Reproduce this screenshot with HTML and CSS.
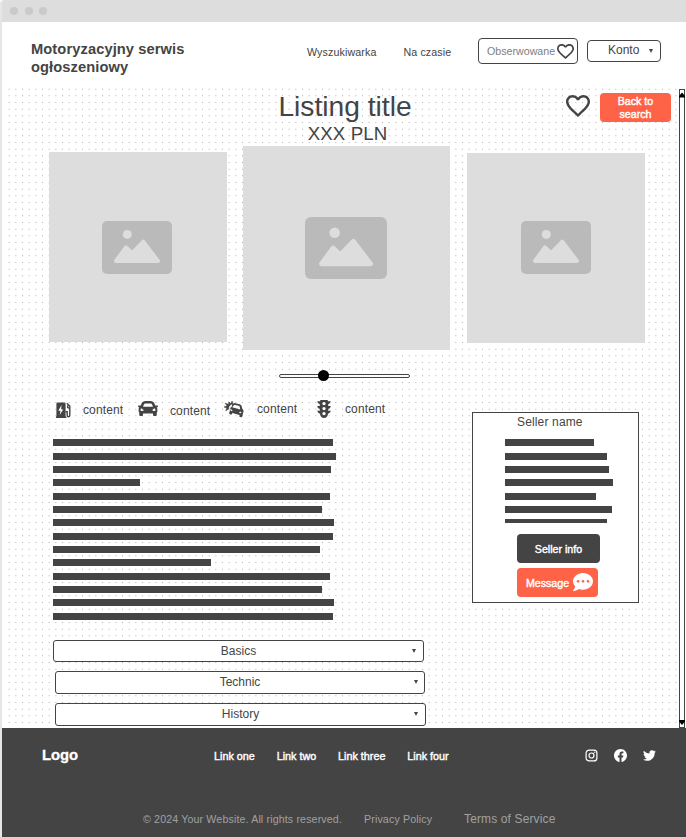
FILE: index.html
```html
<!DOCTYPE html>
<html lang="pl">
<head>
<meta charset="utf-8">
<title>Listing title</title>
<link rel="stylesheet" href="styles.css">
</head>
<body>
<svg class="defs" width="0" height="0" aria-hidden="true">
  <defs>
    <symbol id="heart" viewBox="2 3 20 18.35" preserveAspectRatio="none"><path d="M12.1,18.55L12,18.65L11.89,18.55C7.14,14.24 4,11.39 4,8.5C4,6.5 5.5,5 7.5,5C9.04,5 10.54,6 11.07,7.36H12.93C13.46,6 14.96,5 16.5,5C18.5,5 20,6.5 20,8.5C20,11.39 16.86,14.24 12.1,18.55M16.5,3C14.76,3 13.09,3.81 12,5.08C10.91,3.81 9.24,3 7.5,3C4.42,3 2,5.41 2,8.5C2,12.27 5.4,15.36 10.55,20.03L12,21.35L13.45,20.03C18.6,15.36 22,12.27 22,8.5C22,5.41 19.58,3 16.5,3Z"/></symbol>
    <symbol id="photo" viewBox="0 0 70 53" preserveAspectRatio="none"><rect width="70" height="53" rx="5" fill="#bababa"/><circle cx="25.3" cy="13.4" r="4.5" fill="#ddd"/><path d="M14 40 24 26.4 30.2 32.2 41.3 20.7 56 40Z" fill="#ddd" stroke="#ddd" stroke-width="4" stroke-linejoin="round"/></symbol>
    <symbol id="caret" viewBox="0 0 4 4"><path d="M0 0H4L2 4Z"/></symbol>
  </defs>
</svg>
<div class="window">
  <div class="titlebar"><i></i><i></i><i></i></div>
  <header class="header">
    <h1 class="brand">Motoryzacyjny serwis ogłoszeniowy</h1>
    <nav class="nav"><a>Wyszukiwarka</a><a>Na czasie</a></nav>
    <div class="watched"><span>Obserwowane</span><svg width="17" height="15"><use href="#heart"/></svg></div>
    <div class="account"><span>Konto</span><svg class="caret"><use href="#caret"/></svg></div>
  </header>
  <main class="main">
    <svg class="dots" aria-hidden="true">
      <defs><pattern id="grid" width="20" height="20" patternUnits="userSpaceOnUse" x="12" y="12"><g fill="#b2b2b2"><path d="M2 2h1v1h-1zM8.67 2h1v1h-1zM15.33 2h1v1h-1zM2 8.67h1v1h-1zM8.67 8.67h1v1h-1zM15.33 8.67h1v1h-1zM2 15.33h1v1h-1zM8.67 15.33h1v1h-1zM15.33 15.33h1v1h-1z"/></g></pattern></defs>
      <rect width="100%" height="100%" fill="url(#grid)"/>
    </svg>
    <div class="content">
      <div class="heading">
        <div class="titles"><h2>Listing title</h2><p>XXX PLN</p></div>
        <svg class="save" width="24" height="22"><use href="#heart"/></svg>
        <button class="btn back">Back to<br>search</button>
      </div>
      <div class="gallery">
        <div class="photo"><svg width="70" height="53"><use href="#photo"/></svg></div>
        <div class="photo large"><svg width="82" height="62"><use href="#photo"/></svg></div>
        <div class="photo last"><svg width="70" height="53"><use href="#photo"/></svg></div>
      </div>
      <div class="slider"><span class="knob"></span></div>
      <div class="columns">
        <section class="details">
          <ul class="features">
            <li><svg class="fuel" width="16" height="16" viewBox="0 0 16 16"><path fill-rule="evenodd" d="M1.6.5h6.8q1.2 0 1.2 1.2V14.5h.8V16H0v-1.5h.4V1.7Q.4.5 1.6.5ZM5.6 3 2.3 8.7h2.2L3.7 13l3.6-5.8H5.1Z"/><path d="M10.8 1.3 13.8 4v9.2q0 1.6-1.3 1.6t-1.3-1.6V9.8H9.6M11.7 3.2v2.4l2 .7" fill="none" stroke="#444" stroke-width="1.4"/></svg><span>content</span></li>
            <li><svg class="car" width="20" height="15" viewBox="0 64 512 384"><path d="M499.99 176h-59.87l-16.64-41.6C406.38 91.63 365.57 64 319.5 64h-127c-46.06 0-86.88 27.63-103.99 70.4L71.87 176H12.01C4.2 176-1.53 183.34.37 190.91l6 24C7.7 220.25 12.5 224 18.01 224h20.07C24.65 235.73 16 252.78 16 272v48c0 16.12 6.16 30.67 16 41.93V416c0 17.67 14.33 32 32 32h32c17.67 0 32-14.33 32-32v-32h256v32c0 17.67 14.33 32 32 32h32c17.67 0 32-14.33 32-32v-54.07c9.84-11.25 16-25.8 16-41.93v-48c0-19.22-8.65-36.27-22.07-48H494c5.51 0 10.31-3.75 11.64-9.09l6-24c1.89-7.57-3.84-14.91-11.65-14.91zm-352.06-17.83c7.29-18.22 24.94-30.17 44.57-30.17h127c19.63 0 37.28 11.95 44.57 30.17L384 208H128l19.93-49.83zM96 319.8c-19.2 0-32-12.76-32-31.9S76.8 256 96 256s48 28.71 48 47.85-28.8 15.95-48 15.95zm320 0c-19.2 0-48 3.19-48-15.95S396.8 256 416 256s32 12.76 32 31.9-12.8 31.9-32 31.9z"/></svg><span>content</span></li>
            <li><svg class="crash" width="20" height="17" viewBox="0 0 20 17"><path d="M8.2 0 6.7 2.6 4.8.8 4.7 3.2 1.2 2.2 3 4.7 0 6.1l2.8.9L1.7 9.8l3-1.7.2-2.4 2-2.2 2-.8Z" stroke="#444" stroke-width=".5"/><path fill-rule="evenodd" d="m8.1 3.3 2-1.2 5.6 1.2q1.6.4 2 2l.5 2.5q1.7 1 1.3 2.8l-.8 2.8-.5 2.2q-.4 1-1.4.7l-.8-.2q-.8-.3-.6-1.2l.2-.9-7.4-2-.3.9q-.3.9-1.2.7l-.8-.3q-.9-.3-.7-1.2l.7-2.5.5-2.3q.4-1.2 1.4-1.6ZM8.2 6.3l8 2.1-.5-2.6q-.2-.8-.9-1l-3.7-.9q-.8-.2-1.3.4ZM6.7 8q-.8 1 .1 1.8l1.7.4q.2-1.4-1.8-2.2Zm10.5 2.7q-1.9-.3-2.2 1.1l1.6.5q1.2-.4.6-1.6Z"/></svg><span>content</span></li>
            <li><svg class="light" width="14" height="18" viewBox="0 0 14 18"><path fill-rule="evenodd" d="M4 0h6q1 0 1 1.2h2.8q-.2 2.2-2.6 3v1.7h2.6q-.2 2.3-2.6 3.1v1.7h2.6q-.2 2.2-2.7 3-.9 4.3-4.1 4.3T2.9 13.7Q.4 12.9.2 10.7h2.6V9Q.4 8.2.2 5.9h2.6V4.2Q.4 3.4.2 1.2H3Q3 0 4 0ZM7 1.9a1.7 1.7 0 1 0 0 3.4 1.7 1.7 0 0 0 0-3.4Zm0 5a1.7 1.7 0 1 0 0 3.4 1.7 1.7 0 0 0 0-3.4Zm0 5a1.7 1.7 0 1 0 0 3.4 1.7 1.7 0 0 0 0-3.4Z"/></svg><span>content</span></li>
          </ul>
          <div class="lines">
            <div style="width:280px"></div><div style="width:283px"></div><div style="width:278px"></div><div style="width:87px"></div><div style="width:277px"></div><div style="width:269px"></div><div style="width:281px"></div><div style="width:280px"></div><div style="width:267px"></div><div style="width:158px"></div><div style="width:277px"></div><div style="width:269px"></div><div style="width:281px"></div><div style="width:280px"></div>
          </div>
          <div class="selects">
            <div class="select basics"><span>Basics</span><svg class="caret"><use href="#caret"/></svg></div>
            <div class="select technic"><span>Technic</span><svg class="caret"><use href="#caret"/></svg></div>
            <div class="select history"><span>History</span><svg class="caret"><use href="#caret"/></svg></div>
          </div>
        </section>
        <aside class="seller">
          <h3>Seller name</h3>
          <div class="lines">
            <div style="width:89px"></div><div style="width:102px"></div><div style="width:104px"></div><div style="width:108px"></div><div style="width:91px"></div><div style="width:107px"></div><div style="width:102px"></div>
          </div>
          <button class="btn info">Seller info</button>
          <button class="btn message"><span>Message</span><svg width="20" height="18" viewBox="0 32 512 448" preserveAspectRatio="none"><path fill="#fff" d="M256 32C114.6 32 0 125.1 0 240c0 49.6 21.4 95 57 130.7C44.5 421.1 2.7 466 2.2 466.5c-2.2 2.3-2.8 5.7-1.5 8.7S4.8 480 8 480c66.3 0 116-31.8 140.6-51.4 32.7 12.3 69 19.4 107.4 19.4 141.4 0 256-93.1 256-208S397.4 32 256 32z"/><g fill="#ff6347"><circle cx="128" cy="240" r="32"/><circle cx="256" cy="240" r="32"/><circle cx="384" cy="240" r="32"/></g></svg></button>
        </aside>
      </div>
    </div>
    <div class="scrollbar">
      <svg width="6" height="8" viewBox="0 0 6 8"><path d="M0 7.5V6L3 2.5 6 6v1.5Z"/></svg>
      <svg width="6" height="8" viewBox="0 0 6 8"><path d="M0 1h6v1.5L3 6 0 2.5Z"/></svg>
    </div>
  </main>
  <footer class="footer">
    <div class="footer-top">
      <strong class="logo">Logo</strong>
      <nav class="links"><a>Link one</a><a>Link two</a><a>Link three</a><a>Link four</a></nav>
      <div class="social">
        <svg class="outline" width="13" height="13" viewBox="0 0 13 13"><rect x="1.1" y="1.1" width="10.8" height="10.8" rx="3"/><circle cx="6.5" cy="6.5" r="2.5"/><circle cx="9.7" cy="3.3" r=".4" stroke-width=".8"/></svg>
        <svg width="13" height="13" viewBox="0 0 24 24"><path d="M24 12.073c0-6.627-5.373-12-12-12s-12 5.373-12 12c0 5.99 4.388 10.954 10.125 11.854v-8.385H7.078v-3.47h3.047V9.43c0-3.007 1.792-4.669 4.533-4.669 1.312 0 2.686.235 2.686.235v2.953H15.83c-1.491 0-1.956.925-1.956 1.874v2.25h3.328l-.532 3.47h-2.796v8.385C19.612 23.027 24 18.062 24 12.073z"/></svg>
        <svg width="13" height="13" viewBox="0 0 24 24"><path d="M23.953 4.57a10 10 0 01-2.825.775 4.958 4.958 0 002.163-2.723c-.951.555-2.005.959-3.127 1.184a4.92 4.92 0 00-8.384 4.482C7.69 8.095 4.067 6.13 1.64 3.162a4.822 4.822 0 00-.666 2.475c0 1.71.87 3.213 2.188 4.096a4.904 4.904 0 01-2.228-.616v.06a4.923 4.923 0 003.946 4.827 4.996 4.996 0 01-2.212.085 4.936 4.936 0 004.604 3.417 9.867 9.867 0 01-6.102 2.105c-.39 0-.779-.023-1.17-.067a13.995 13.995 0 007.557 2.209c9.053 0 13.998-7.496 13.998-13.985 0-.21 0-.42-.015-.63A9.935 9.935 0 0024 4.59z"/></svg>
      </div>
    </div>
    <div class="legal"><span>© 2024 Your Website. All rights reserved.</span><a>Privacy Policy</a><a class="terms">Terms of Service</a></div>
  </footer>
</div>
</body>
</html>
```
FILE: styles.css
```css
* { box-sizing: border-box; }
body {
  margin: 0;
  width: 686px;
  height: 837px;
  overflow: hidden;
  background: #fff;
  font-family: "Liberation Sans", Arial, sans-serif;
  font-size: 12px;
  color: #444;
}
h1, h2, h3, p, ul { margin: 0; padding: 0; font-weight: normal; }
svg { display: block; flex: none; fill: #444; }
.defs { position: absolute; }
.window {
  height: 837px;
  border-left: 2px solid #e6e6e6;
  border-top-left-radius: 4px;
  overflow: hidden;
}
.titlebar {
  height: 22px;
  padding: 7px 0 0 8px;
  display: flex;
  background: #ddd;
}
.titlebar i { width: 8px; height: 8px; border-radius: 50%; background: #cacaca; margin-right: 7px; }
.titlebar i:nth-child(2) { margin-right: 6px; }

.header { height: 66px; display: flex; align-items: flex-start; white-space: nowrap; }
.brand {
  flex: none;
  width: 160px;
  margin: 18px 0 0 29px;
  font-size: 14.67px;
  letter-spacing: 0.1px;
  line-height: 18px;
  font-weight: bold;
  white-space: normal;
}
.nav {
  flex: none;
  display: flex;
  gap: 27px;
  width: 171px;
  margin: 24px 0 0 116px;
  font-size: 10.67px;
  letter-spacing: 0.12px;
  line-height: 13px;
}
.watched {
  flex: none;
  width: 100px;
  height: 26px;
  margin-top: 16px;
  padding: 0 3px 0 8px;
  display: flex;
  align-items: center;
  justify-content: space-between;
  border: 1px solid #444;
  border-radius: 4px;
  font-size: 10.67px;
  color: #808080;
}
.account {
  flex: none;
  width: 74px;
  height: 22px;
  margin: 18px 0 0 9px;
  padding: 0 7px 2px 20px;
  display: flex;
  align-items: center;
  justify-content: space-between;
  border: 1px solid #444;
  border-radius: 4px;
}
.account .caret { margin-top: 2px; }
.caret { width: 4px; height: 4px; }

.main { position: relative; height: 640px; display: flex; }
.dots { position: absolute; left: 6px; top: 0; width: 671px; height: 640px; }
.content { position: relative; flex: none; width: 677px; }
.heading { height: 58px; display: flex; align-items: flex-start; padding-left: 243px; }
.titles { flex: none; width: 200px; text-align: center; white-space: nowrap; }
.titles h2 { font-size: 28.2px; line-height: 32px; margin: 2px 0 1px; }
.titles p { font-size: 18.67px; letter-spacing: 0.1px; line-height: 22px; padding-left: 5px; }
.save { margin: 7px 0 0 121px; }
.btn {
  display: flex;
  align-items: center;
  justify-content: center;
  padding: 0;
  border: 0;
  border-radius: 4px;
  font: 10.67px/13px "Liberation Sans", Arial, sans-serif;
  color: #fff;
  -webkit-text-stroke: 0.4px #fff;
}
.back { flex: none; width: 71px; height: 29px; margin: 5px 0 0 10px; background: #ff6347; }
.gallery { height: 204px; display: flex; align-items: flex-start; padding-left: 47px; gap: 16px; }
.photo { width: 178px; height: 190px; margin-top: 6px; padding: 69px 0 0 53px; background: #ddd; }
.photo.large { width: 207px; height: 204px; margin-top: 0; padding: 70.5px 0 0 62px; }
.photo.last { margin: 7px 0 0 1px; padding: 68px 0 0 54px; }
.slider {
  position: relative;
  width: 131px;
  height: 4px;
  margin: 24px 0 0 277px;
  border: 1px solid #444;
  border-radius: 2px;
  background: #fff;
}
.knob { position: absolute; left: 38px; top: -5px; width: 11px; height: 11px; border-radius: 50%; background: #000; }

.columns { display: flex; align-items: flex-start; padding-left: 51px; }
.details { width: 419px; }
.features {
  display: flex;
  height: 61.33px;
  padding: 22px 0 0 3px;
  list-style: none;
  font-size: 12px;
  letter-spacing: 0.12px;
  line-height: 14px;
}
.features li { display: flex; align-items: flex-start; }
.features li:nth-child(1) { width: 82px; }
.features li:nth-child(2) { width: 86px; }
.features li:nth-child(3) { width: 93px; }
.fuel { margin: 2px 11px 0 0; }
.features li:nth-child(1) span { margin-top: 3px; }
.car { margin: 1px 12px 0 0; }
.features li:nth-child(2) span { margin-top: 4px; }
.crash { margin: 1px 13px 0 0; }
.features li:nth-child(3) span, .features li:nth-child(4) span { margin-top: 2px; }
.light { margin: 0 14px 0 0; }
.lines { display: grid; row-gap: 6.333px; }
.lines div { height: 7px; background: #444; }
.selects { margin-top: 20.33px; }
.select {
  display: flex;
  align-items: center;
  justify-content: center;
  position: relative;
  border: 1px solid #444;
  border-radius: 3px;
  background: #fff;
}
.select .caret { position: absolute; right: 7px; top: 8px; }
.basics { width: 371px; height: 22px; }
.technic { width: 370px; height: 23px; margin: 9px 0 0 2px; }
.technic .caret { right: 6px; }
.history { width: 371px; height: 23px; margin: 9px 0 0 2px; }
.seller {
  width: 167px;
  height: 191px;
  margin-top: 34px;
  border: 1px solid #444;
  background: #fff;
}
.seller h3 { font-size: 12px; letter-spacing: 0.15px; line-height: 14px; margin: 2px 0 10.33px 44px; }
.seller .lines { margin-left: 32px; height: 83.67px; }
.seller .lines div:last-child { height: 4px; }
.info { width: 83px; height: 29px; margin: 11px 0 0 44px; padding-top: 2px; background: #444; }
.message { width: 81px; height: 29px; margin: 5px 0 0 44px; padding-left: 4px; gap: 4px; background: #ff6347; }
.message span { padding-top: 2px; }
.scrollbar {
  position: relative;
  width: 6px;
  height: 639px;
  margin-top: 1px;
  border: 1px solid #444;
  background: #fff;
  display: flex;
  flex-direction: column;
  align-items: center;
  justify-content: space-between;
}
.scrollbar svg { fill: #000; }

.footer { height: 109px; background: #444; color: #fff; white-space: nowrap; }
.footer-top { display: flex; height: 85px; }
.logo { flex: none; width: 212px; padding: 19px 0 0 40px; font-size: 14.8px; line-height: 17px; -webkit-text-stroke: 0.3px #fff; }
.links {
  flex: none;
  display: flex;
  gap: 21.8px;
  width: 331px;
  padding-top: 22px;
  font-size: 10.8px;
  line-height: 13px;
  -webkit-text-stroke: 0.4px #fff;
}
.social { display: flex; gap: 16px; padding: 21px 0 0 40px; }
.social svg { fill: #fff; }
.social .outline { fill: none; stroke: #fff; stroke-width: 1.2; }
.legal { display: flex; padding-left: 141px; font-size: 10.67px; letter-spacing: 0.13px; line-height: 13px; color: #a1a1a1; }
.legal span { width: 221px; }
.legal a { width: 100px; }
.legal .terms { font-size: 12px; }
```
